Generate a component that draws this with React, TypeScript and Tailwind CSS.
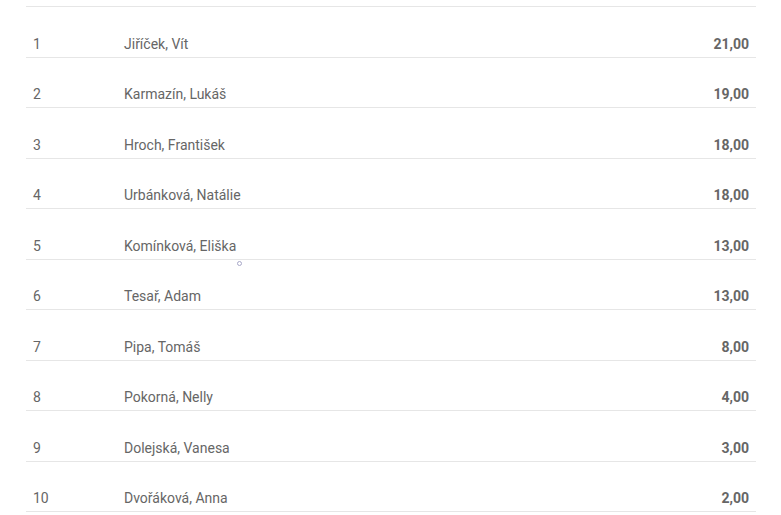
import React from "react";

const rows = [
  ["1", "Jiříček, Vít", "21,00"],
  ["2", "Karmazín, Lukáš", "19,00"],
  ["3", "Hroch, František", "18,00"],
  ["4", "Urbánková, Natálie", "18,00"],
  ["5", "Komínková, Eliška", "13,00"],
  ["6", "Tesař, Adam", "13,00"],
  ["7", "Pipa, Tomáš", "8,00"],
  ["8", "Pokorná, Nelly", "4,00"],
  ["9", "Dolejská, Vanesa", "3,00"],
  ["10", "Dvořáková, Anna", "2,00"],
];

export default function App() {
  return (
    <div
      className="relative w-[781px] h-[515px] overflow-hidden bg-white text-[14px] text-[#666666]"
      style={{ fontFamily: "Roboto, 'Liberation Sans', sans-serif" }}
    >
      <div className="ml-[26px] w-[730px]">
        <div className="h-[7px] border-b border-[#e6e6e6]" />
        {rows.map(([pos, name, pts]) => (
          <div
            key={pos}
            className="flex items-end h-[50.5px] border-b border-[#e6e6e6] pb-[3px] leading-5"
          >
            <div className="w-[98px] pl-[7px]">{pos}</div>
            <div className="flex-1">{name}</div>
            <div className="pr-[7px] font-bold">{pts}</div>
          </div>
        ))}
      </div>
      <div className="absolute left-[237px] top-[261px] w-[5px] h-[5px] rounded-full border border-[#a8a8c8]" />
    </div>
  );
}
